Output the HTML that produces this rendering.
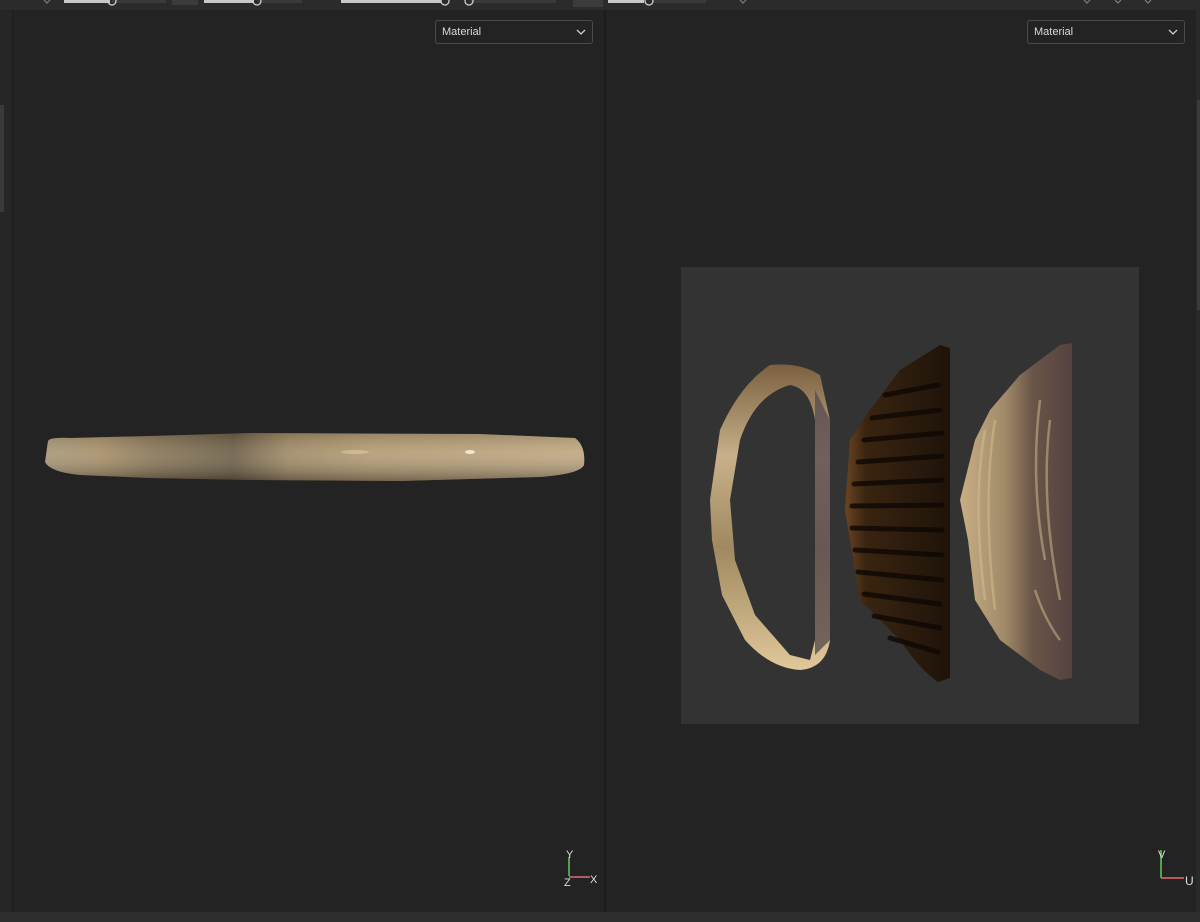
<!DOCTYPE html>
<html><head><meta charset="utf-8"><style>
body{margin:0;width:1200px;height:922px;background:#232323;overflow:hidden;position:relative;font-family:"Liberation Sans",sans-serif}
.abs{position:absolute}
.dd{position:absolute;top:20px;width:158px;height:24px;border:1px solid #4a4a4a;border-radius:3px;background:#232323;color:#d8d8d8;font-size:11px;line-height:23px;box-sizing:border-box;padding-left:6px}
.dd svg{position:absolute;right:6px;top:8px}
</style></head><body>
<div class="abs" style="left:0;top:0;width:1200px;height:10px;background:#2b2b2b"></div>
<div class="abs" style="left:64px;top:0;width:46px;height:3px;background:#c8c8c8"></div>
<div class="abs" style="left:112px;top:0;width:54px;height:3px;background:#3a3a3a"></div>
<div class="abs" style="left:172px;top:0;width:26px;height:5px;background:#3c3c3c"></div>
<div class="abs" style="left:204px;top:0;width:50px;height:3px;background:#c8c8c8"></div>
<div class="abs" style="left:258px;top:0;width:44px;height:3px;background:#3a3a3a"></div>
<div class="abs" style="left:341px;top:0;width:100px;height:3px;background:#c8c8c8"></div>
<div class="abs" style="left:470px;top:0;width:86px;height:3px;background:#3a3a3a"></div>
<div class="abs" style="left:573px;top:0;width:30px;height:7px;background:#3c3c3c"></div>
<div class="abs" style="left:608px;top:0;width:36px;height:3px;background:#c8c8c8"></div>
<div class="abs" style="left:652px;top:0;width:54px;height:3px;background:#3a3a3a"></div>
<svg class="abs" style="left:0;top:0" width="1200" height="10">
<g fill="none" stroke="#d0d0d0" stroke-width="1.3">
<circle cx="112" cy="1" r="4"/><circle cx="257" cy="1" r="4"/><circle cx="445" cy="1" r="4"/><circle cx="469" cy="1" r="4"/><circle cx="649" cy="1" r="4"/>
</g>
<g fill="none" stroke="#888" stroke-width="1"><path d="M44 0l3 3 3-3M740 0l3 3 3-3M1084 0l3 3 3-3M1115 0l3 3 3-3M1145 0l3 3 3-3"/></g>
</svg>
<div class="abs" style="left:0;top:10px;width:12px;height:902px;background:#262626;border-right:1px solid #1c1c1c"></div>
<div class="abs" style="left:0;top:105px;width:4px;height:107px;background:#3a3a3a"></div>
<div class="abs" style="left:604px;top:10px;width:2px;height:902px;background:#1b1b1b"></div>
<div class="abs" style="left:1196px;top:10px;width:4px;height:902px;background:#2a2a2a"></div>
<div class="abs" style="left:1197px;top:100px;width:3px;height:210px;background:#3a3a3a"></div>
<div class="abs" style="left:0;top:912px;width:1200px;height:10px;background:#2e2e2e"></div>

<div class="dd" style="left:435px">Material<svg width="10" height="7"><path d="M1 1l4 4 4-4" stroke="#ccc" fill="none" stroke-width="1.3"/></svg></div>
<div class="dd" style="left:1027px">Material<svg width="10" height="7"><path d="M1 1l4 4 4-4" stroke="#ccc" fill="none" stroke-width="1.3"/></svg></div>

<svg class="abs" style="left:0;top:0" width="604" height="912">
<defs>
<linearGradient id="bar" x1="0" x2="1">
<stop offset="0" stop-color="#a89878"/><stop offset="0.1" stop-color="#a8906a"/><stop offset="0.2" stop-color="#8a7858"/><stop offset="0.35" stop-color="#6e6048"/><stop offset="0.45" stop-color="#a08a66"/><stop offset="0.6" stop-color="#b39b74"/><stop offset="0.8" stop-color="#b8a07a"/><stop offset="1" stop-color="#c0a880"/>
</linearGradient>
<linearGradient id="barv" x1="0" y1="0" x2="0" y2="1"><stop offset="0" stop-color="#000" stop-opacity="0.15"/><stop offset="0.4" stop-color="#fff" stop-opacity="0.08"/><stop offset="1" stop-color="#000" stop-opacity="0.35"/></linearGradient>
</defs>
<path d="M48 441 Q50 437 70 438 L150 436 L250 433 L480 434 L575 438 Q586 446 584 465 Q580 474 540 477 L400 481 L250 480 L150 478 L80 475 Q50 472 45 462 Z" fill="url(#bar)"/>
<path d="M48 441 Q50 437 70 438 L150 436 L250 433 L480 434 L575 438 Q586 446 584 465 Q580 474 540 477 L400 481 L250 480 L150 478 L80 475 Q50 472 45 462 Z" fill="url(#barv)"/>
<ellipse cx="470" cy="452" rx="5" ry="2" fill="#f4e6c8"/>
<ellipse cx="355" cy="452" rx="14" ry="2" fill="#e0caa0" opacity="0.6"/>
<line x1="569" y1="857" x2="569" y2="876" stroke="#5fcf5f" stroke-width="1.5"/>
<line x1="569" y1="877" x2="590" y2="877" stroke="#e07070" stroke-width="1.5"/>
<text x="566" y="858" fill="#ddd" font-size="11">Y</text>
<text x="590" y="883" fill="#ddd" font-size="11">X</text>
<text x="564" y="886" fill="#ddd" font-size="11">Z</text>
</svg>

<div class="abs" style="left:681px;top:267px;width:458px;height:457px;background:#333333"></div>
<svg class="abs" style="left:0;top:0" width="1200" height="912">
<defs>
<linearGradient id="ring" x1="0" y1="0" x2="0" y2="1"><stop offset="0" stop-color="#7a6040"/><stop offset="0.3" stop-color="#c8b08a"/><stop offset="0.6" stop-color="#a08860"/><stop offset="1" stop-color="#e0c89a"/></linearGradient>
<linearGradient id="gill" x1="0" x2="1"><stop offset="0" stop-color="#6a4522"/><stop offset="0.2" stop-color="#3a2410"/><stop offset="1" stop-color="#1e130a"/></linearGradient>
<linearGradient id="cap" x1="0" x2="1"><stop offset="0" stop-color="#c8ae84"/><stop offset="0.4" stop-color="#a08a68"/><stop offset="0.65" stop-color="#6a5548"/><stop offset="1" stop-color="#554240"/></linearGradient>
</defs>
<path d="M770 365 Q800 362 820 375 L830 420 L830 640 Q826 668 800 670 Q770 668 745 640 L722 595 L712 540 L710 500 L720 430 Q740 385 770 365Z M790 385 Q755 395 740 440 L730 500 L735 560 L755 615 L790 655 L810 660 L815 640 L815 420 Q810 388 790 385Z" fill="url(#ring)" fill-rule="evenodd"/>
<path d="M815 390 L830 420 L830 640 L815 655 Z" fill="#5a4c50" opacity="0.8"/>
<path d="M940 345 L950 348 L950 678 L938 682 Q920 670 900 640 L860 600 L845 510 L850 440 L870 410 L900 370 Z" fill="url(#gill)"/>
<g stroke="#0e0804" stroke-width="5" opacity="0.8" stroke-linecap="round">
<line x1="885" y1="395" x2="938" y2="385"/><line x1="872" y1="418" x2="940" y2="410"/><line x1="864" y1="440" x2="942" y2="433"/><line x1="858" y1="462" x2="942" y2="456"/><line x1="854" y1="484" x2="942" y2="480"/><line x1="852" y1="506" x2="942" y2="505"/><line x1="852" y1="528" x2="942" y2="530"/><line x1="855" y1="550" x2="942" y2="555"/><line x1="858" y1="572" x2="942" y2="580"/><line x1="864" y1="594" x2="940" y2="604"/><line x1="874" y1="616" x2="940" y2="628"/><line x1="890" y1="638" x2="938" y2="652"/>
</g>
<path d="M1060 345 L1072 343 L1072 678 L1060 680 L1040 670 L1000 640 L975 600 L968 540 L960 500 L975 440 L990 410 L1020 375 Z" fill="url(#cap)"/>
<g stroke="#d8c090" stroke-width="2.5" fill="none" opacity="0.5">
<path d="M1040 400 Q1030 480 1045 560"/><path d="M1050 420 Q1040 500 1060 600"/><path d="M1035 590 Q1045 620 1060 640"/><path d="M985 430 Q972 500 985 600"/><path d="M995 420 Q982 500 995 610"/>
</g>
<line x1="1161" y1="850" x2="1161" y2="878" stroke="#5fcf5f" stroke-width="1.5"/>
<line x1="1161" y1="878" x2="1184" y2="878" stroke="#e07070" stroke-width="1.5"/>
<text x="1158" y="858" fill="#ddd" font-size="11">V</text>
<text x="1185" y="885" fill="#ddd" font-size="12">U</text>
</svg>
</body></html>
